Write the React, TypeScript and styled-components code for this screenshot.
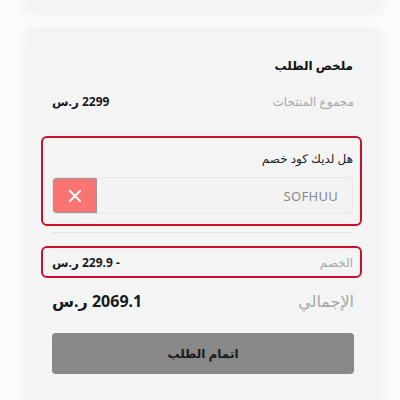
import React from "react";
import styled, { createGlobalStyle } from "styled-components";

const Global = createGlobalStyle`
  html, body {
    margin: 0;
    padding: 0;
    background: #fbfbfb;
    font-family: "Noto Sans", "DejaVu Sans", sans-serif;
  }
`;

const Page = styled.div`
  width: 400px;
  height: 400px;
  overflow: hidden;
  padding: 0 20px 0 26px;
  box-sizing: border-box;
  display: flex;
  flex-direction: column;
  gap: 19px;
`;

const Card = styled.div`
  flex-shrink: 0;
  background: #f4f4f4;
  border-radius: 6px;
  box-shadow: 0 2px 14px rgba(0, 0, 0, 0.06);
`;

const TopCard = styled(Card)`
  height: 40px;
  margin-top: -30px;
`;

const Summary = styled(Card)`
  direction: rtl;
  padding: 30px 18px 40px 15px;
  display: flex;
  flex-direction: column;
`;

const Title = styled.h3`
  margin: 0 9px 18px 11px;
  font-size: 12px;
  font-weight: 700;
  color: #111;
  line-height: 14px;
`;

const Row = styled.div<{ $big?: boolean }>`
  display: flex;
  justify-content: space-between;
  align-items: center;
  padding: 0 8px 0 11px;
  height: ${(p) => (p.$big ? "28px" : "20px")};
`;

const Label = styled.span<{ $big?: boolean }>`
  font-size: ${(p) => (p.$big ? "16px" : "12px")};
  color: #a8a8a8;
`;

const Value = styled.span<{ $big?: boolean }>`
  font-size: ${(p) => (p.$big ? "16px" : "12px")};
  font-weight: 700;
  color: #1a1a1a;
`;

const Highlight = styled.div`
  border: 2px solid #c8102e;
  border-radius: 6px;
`;

const CouponBox = styled(Highlight)`
  margin-top: 25px;
  padding: 13px 7px 10px 9px;
  display: flex;
  flex-direction: column;
  gap: 10px;
`;

const CouponLabel = styled.span`
  font-size: 12px;
  color: #222;
  line-height: 16px;
`;

const CouponField = styled.div`
  display: flex;
  height: 37px;
  border: 1px solid #e6e6e6;
  border-radius: 4px;
  background: #f3f3f3;
  box-sizing: border-box;
  overflow: hidden;
`;

const CouponText = styled.div`
  flex: 1;
  display: flex;
  align-items: center;
  padding: 0 14px;
  font-size: 13px;
  color: #8a8a8a;
  letter-spacing: 0.3px;
`;

const RemoveButton = styled.button`
  width: 44px;
  border: 1px solid #999;
  background: #fb7474;
  display: flex;
  align-items: center;
  justify-content: center;
  padding: 0;
  border-radius: 3px 0 0 3px;
`;

const Divider = styled.div`
  height: 1px;
  background: #e4e4e4;
  margin: 6px 9px 13px 11px;
`;

const DiscountBox = styled(Highlight)`
  height: 32px;
  box-sizing: border-box;
  display: flex;
  align-items: center;
  justify-content: space-between;
  padding: 0 7px 0 9px;
  margin-bottom: 9px;
`;

const Checkout = styled.button`
  margin: 18px 8px 0 11px;
  height: 41px;
  border: none;
  border-radius: 4px;
  background: #888888;
  color: #1a1a1a;
  font-family: inherit;
  font-size: 12px;
  font-weight: 600;
`;

export default function App() {
  return (
    <>
      <Global />
      <Page>
        <TopCard />
        <Summary>
          <Title>ملخص الطلب</Title>
          <Row>
            <Label>مجموع المنتجات</Label>
            <Value>2299 ر.س</Value>
          </Row>
          <CouponBox>
            <CouponLabel>هل لديك كود خصم</CouponLabel>
            <CouponField>
              <CouponText>SOFHUU</CouponText>
              <RemoveButton aria-label="remove">
                <svg width="12" height="12" viewBox="0 0 12 12">
                  <path d="M1 1L11 11M11 1L1 11" stroke="#fff" strokeWidth="2" strokeLinecap="round" />
                </svg>
              </RemoveButton>
            </CouponField>
          </CouponBox>
          <Divider />
          <DiscountBox>
            <Label>الخصم</Label>
            <Value>- 229.9 ر.س</Value>
          </DiscountBox>
          <Row $big>
            <Label $big>الإجمالي</Label>
            <Value $big>2069.1 ر.س</Value>
          </Row>
          <Checkout>اتمام الطلب</Checkout>
        </Summary>
      </Page>
    </>
  );
}
